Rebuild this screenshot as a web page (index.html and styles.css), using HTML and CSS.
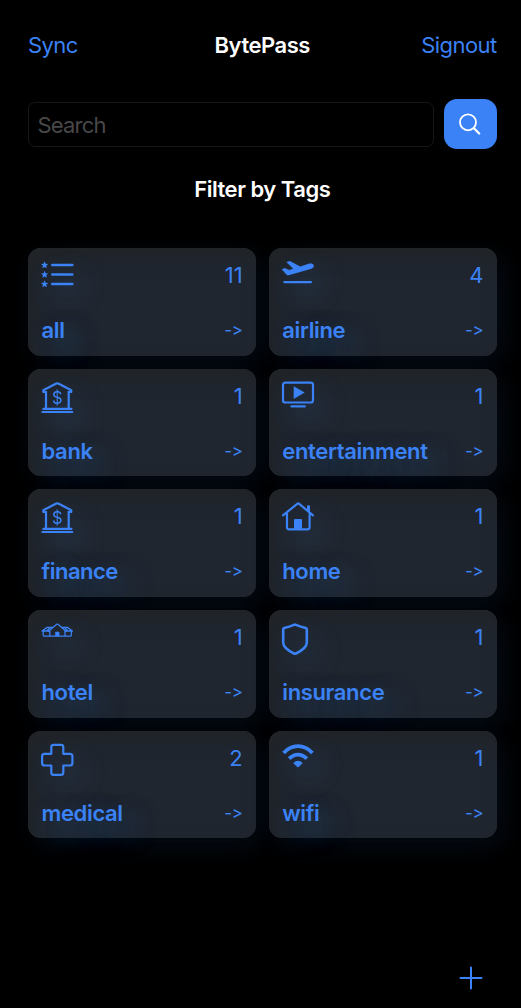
FILE: index.html
```html
<!DOCTYPE html>
<html lang="en">
<head>
<meta charset="utf-8">
<title>BytePass</title>
<link rel="stylesheet" href="styles.css">
</head>
<body>
<div class="app">
  <header class="nav">
    <a class="nav-link sync">Sync</a>
    <h1 class="title">BytePass</h1>
    <a class="nav-link signout">Signout</a>
  </header>
  <div class="search">
    <div class="field">Search</div>
    <button class="go" aria-label="Search"><svg width="24" height="24" viewBox="0 0 24 24" fill="none" stroke="#fff" stroke-linecap="round"><circle cx="10" cy="10.3" r="8" stroke-width="1.8"/><path d="M15.9 16.2 21.2 21.5"/></svg></button>
  </div>
  <h2 class="heading">Filter by Tags</h2>
  <main class="grid">
    <section class="card">
      <svg class="icon" viewBox="0 0 33 33"><g class="solid"><path id="star" d="M3.6.3 4.6 2.8 7.2 3 5.2 4.7 5.9 7.3 3.6 5.9 1.3 7.3 2 4.7 0 3 2.6 2.8Z"/><use href="#star" y="9.5"/><use href="#star" y="19"/></g><path d="M11.3 4H31.3M11.3 13.5H31.3M11.3 23H31.3"/></svg>
      <span class="count">11</span><span class="label all">all</span><span class="arrow">-&gt;</span>
    </section>
    <section class="card">
      <svg class="icon" viewBox="0 0 33 33"><path class="solid" d="M5.2.8 7.3.2C7.8 0 8.3.1 8.7.4L18.3 5.4 26.6 2.8C29.2 2 31.2 2.5 31.7 4.2 32.2 6 31 7.2 28.7 7.9L7.6 14C5.8 14.5 5 14.3 3.9 13L.3 8.9C-.1 8.4.1 8 .7 7.8L2.5 7.3C3.1 7.1 3.5 7.2 4 7.5L7 9.1 11.2 7.8 5 1.8C4.6 1.3 4.7 1 5.2.8Z"/><path class="line-md" d="M2.3 21.1H29"/></svg>
      <span class="count">4</span><span class="label airline">airline</span><span class="arrow">-&gt;</span>
    </section>
    <section class="card">
      <svg class="icon" viewBox="0 0 33 33"><path class="line-md" d="M5 10V26M27.7 10V26M2.4 26.8H30.4M1.4 30H31.3M2.3 10V8.2L14.8 1.8Q16.3 1 17.8 1.8L30.3 8.2V10H27.4M2.3 10H5.2"/><text class="dollar" x="16.3" y="21.6">$</text></svg>
      <span class="count">1</span><span class="label bank">bank</span><span class="arrow">-&gt;</span>
    </section>
    <section class="card">
      <svg class="icon" viewBox="0 0 33 33"><rect class="line-md" x="1" y=".6" width="30" height="19.9" rx="2.3"/><path class="solid" d="M11.7 4.2 22.7 10.4 11.7 17Z"/><path class="line-md" d="M9.4 24.4H22.8"/></svg>
      <span class="count">1</span><span class="label entertainment">entertainment</span><span class="arrow">-&gt;</span>
    </section>
    <section class="card">
      <svg class="icon" viewBox="0 0 33 33"><path class="line-md" d="M5 10V26M27.7 10V26M2.4 26.8H30.4M1.4 30H31.3M2.3 10V8.2L14.8 1.8Q16.3 1 17.8 1.8L30.3 8.2V10H27.4M2.3 10H5.2"/><text class="dollar" x="16.3" y="21.6">$</text></svg>
      <span class="count">1</span><span class="label finance">finance</span><span class="arrow">-&gt;</span>
    </section>
    <section class="card">
      <svg class="icon" viewBox="0 0 33 33"><path class="line-md" d="M1 13.3 15.2 1.9Q16.2 1.1 17.2 1.9L31 13.3M5 10.5V25.3Q5 27.3 7 27.3H25.6Q27.6 27.3 27.6 25.3V10.5"/><path class="solid" d="M12 27V18Q12 17.1 13 17.1H19Q20 17.1 20 18V27ZM25 8V4Q25 3.2 25.8 3.2H27.2Q28 3.2 28 4V10.3Z"/></svg>
      <span class="count">1</span><span class="label home">home</span><span class="arrow">-&gt;</span>
    </section>
    <section class="card">
      <svg class="icon" viewBox="0 0 33 33"><path class="line-thin" d="M7.5 8.3 15.7 1.3Q16.3.9 16.9 1.3L25 8.3M11.7 4.4H6.2L1 8H7.6M20.8 4.4H26.3L31.5 8H25M8.8 4.8 5.8 8M23.8 4.8 26.8 8M2.2 8V12Q2.2 13.2 3.5 13.2H29Q30.4 13.2 30.4 12V8M8.8 7.5V13M24 7.5V13"/><path class="solid" d="M14.2 13.2V9.4Q14.2 8.7 15 8.7H17.6Q18.4 8.7 18.4 9.4V13.2Z"/></svg>
      <span class="count">1</span><span class="label hotel">hotel</span><span class="arrow">-&gt;</span>
    </section>
    <section class="card">
      <svg class="icon" viewBox="0 0 33 33"><path d="M12 1.9Q13 1.4 14 1.9 18.5 3.9 23.8 5.1 24.8 5.4 24.8 6.4V19.5C24.8 24 19.7 27.7 14 30.5Q13 31 12 30.5C6.3 27.7 1.2 24 1.2 19.5V6.4Q1.2 5.4 2.2 5.1 7.5 3.9 12 1.9Z"/></svg>
      <span class="count">1</span><span class="label insurance">insurance</span><span class="arrow">-&gt;</span>
    </section>
    <section class="card">
      <svg class="icon" viewBox="0 0 33 33"><path class="line-md" d="M12.6 .8H20Q22.3 .8 22.3 3.1V9.8H29Q31.4 9.8 31.4 12.2V19.1Q31.4 21.5 29 21.5H22.3V28.4Q22.3 30.8 20 30.8H12.6Q10.3 30.8 10.3 28.4V21.5H3.5Q1.1 21.5 1.1 19.1V12.2Q1.1 9.8 3.5 9.8H10.3V3.1Q10.3 .8 12.6 .8Z"/></svg>
      <span class="count">2</span><span class="label medical">medical</span><span class="arrow">-&gt;</span>
    </section>
    <section class="card">
      <svg class="icon" viewBox="0 0 33 33"><path class="wave" d="M1.6 9C9.8-.2 22.2-.2 30.4 9M7.2 14.7C12.3 9.2 19.7 9.2 24.8 14.7"/><path class="solid" d="M11.6 18.8C14 16 18 16 20.4 18.8Q20.7 19.2 20.3 19.6L16.7 23Q16 23.6 15.3 23L11.7 19.6Q11.3 19.2 11.6 18.8Z"/></svg>
      <span class="count">1</span><span class="label wifi">wifi</span><span class="arrow">-&gt;</span>
    </section>
  </main>
  <footer class="footer"><svg width="24" height="24" viewBox="0 0 24 24"><path class="line-md" d="M1.5 12H22.5M12 1.5V22.5"/></svg></footer>
</div>
</body>
</html>
```
FILE: styles.css
```css
* { box-sizing: border-box; }
body {
  margin: 0;
  background: #000;
  color: #3b82f6;
  font-family: Inter, "Liberation Sans", sans-serif;
  font-size: 22px;
  line-height: 28px;
  font-feature-settings: "calt" 0, "liga" 0;
}
.app {
  height: 1008px;
  padding: 31px 24.5px 0 28px;
  display: flex;
  flex-direction: column;
  overflow: hidden;
}
.nav {
  display: grid;
  grid-template-columns: 1fr auto 1fr;
  height: 28px;
}
.signout { text-align: right; }
.nav-link { letter-spacing: -0.6px; }
.title, .heading {
  margin: 0;
  color: #fff;
  font-size: 22px;
  font-weight: 600;
  line-height: 28px;
  letter-spacing: -0.48px;
}
.search {
  display: flex;
  align-items: center;
  gap: 10px;
  height: 50px;
  margin-top: 40px;
}
.field {
  flex: 1;
  height: 45px;
  padding: 8px 8.5px;
  border: 1px solid #171717;
  border-radius: 7px;
  color: #48484a;
  letter-spacing: -0.8px;
}
.go {
  width: 52.5px;
  height: 50px;
  padding: 0;
  border: 0;
  border-radius: 13px;
  background: #3b82f6;
  display: grid;
  place-items: center;
}
.heading {
  margin-top: 26px;
  text-align: center;
}
.grid {
  display: grid;
  grid-template-columns: 1fr 1fr;
  grid-auto-rows: 107.7px;
  gap: 13px;
  margin-top: 45px;
}
.card {
  display: grid;
  grid-template-columns: 1fr auto;
  grid-template-rows: 55px 28px;
  padding: 13px;
  border-radius: 13px;
  background: #202630;
  box-shadow: 6px 8px 26px rgba(59, 130, 246, .09), inset 0 0 1px #303338, inset 5px 8px 18px #212426;
}
.icon {
  width: 33px;
  height: 33px;
  overflow: visible;
  filter: drop-shadow(10px 12px 12px rgba(40, 120, 190, .28));
}
svg path, svg rect {
  fill: none;
  stroke: #3b82f6;
  stroke-width: 2.6;
  stroke-linecap: round;
  stroke-linejoin: round;
}
.go path { stroke: #fff; stroke-width: 2.3; }
svg .solid, svg .solid path { fill: #3b82f6; stroke: none; }
svg .line-md { stroke-width: 2.2; }
svg .line-thin { stroke-width: 1.3; }
svg .wave { stroke-width: 3.9; stroke-linecap: butt; }
.dollar {
  fill: #3b82f6;
  font-size: 17px;
  text-anchor: middle;
}
.count {
  text-align: right;
}
.label {
  padding-left: 0.5px;
  font-weight: 600;
  letter-spacing: -0.35px;
  text-shadow: 10px 11px 26px rgba(40, 120, 190, .5);
}
.finance { letter-spacing: -0.5px; }
.arrow {
  font-size: 17px;
  letter-spacing: -0.3px;
  text-align: right;
}
.footer {
  display: flex;
  justify-content: flex-end;
  margin-top: 128px;
  padding-right: 14px;
}
.footer path { stroke-width: 2; }
```
